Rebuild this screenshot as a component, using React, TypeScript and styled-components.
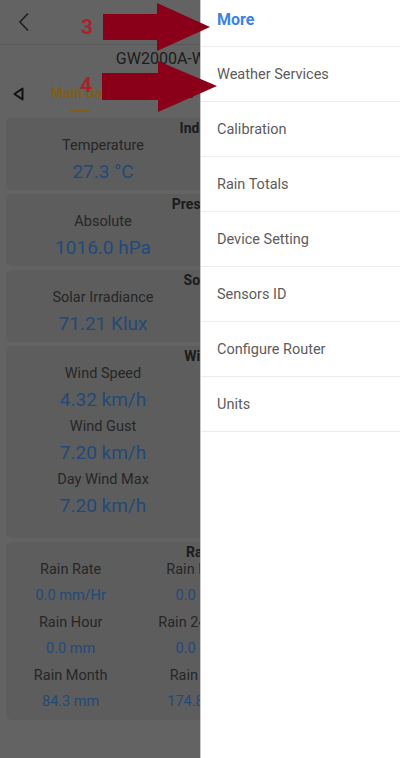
import React from 'react'
import styled, { createGlobalStyle } from 'styled-components'

const GlobalStyle = createGlobalStyle`
  html, body {
    margin: 0;
    padding: 0;
  }
  body {
    font-family: Roboto, "Noto Sans", "Liberation Sans", sans-serif;
  }
`

const Screen = styled.div`
  position: relative;
  display: flex;
  width: 400px;
  height: 758px;
  overflow: hidden;
`

// left half of the app, dimmed by the open drawer
const Backdrop = styled.div`
  flex: none;
  width: 200px;
  height: 100%;
  overflow: hidden;
  background: #636363;
`

const Page = styled.div`
  display: flex;
  flex-direction: column;
  width: 400px;
`

const TopBar = styled.div`
  display: flex;
  align-items: center;
  height: 44px;
  padding-left: 17px;
  border-bottom: 1px solid #5a5a5a;
`

const DeviceName = styled.div`
  height: 28px;
  line-height: 28px;
  text-align: center;
  font-size: 16px;
  color: #1c1c1c;
`

const TabBar = styled.div`
  display: flex;
  align-items: flex-start;
  height: 45px;
  padding: 12px 0 0 13px;
  box-sizing: border-box;
`

const TabIcon = styled.svg`
  margin-top: 2px;
  flex: none;
`

const Tab = styled.div<{ $active?: boolean }>`
  display: flex;
  flex-direction: column;
  align-items: center;
  margin-left: ${p => (p.$active ? '27px' : '41px')};
  font-size: 14px;
  font-weight: 700;
  line-height: 16px;
  color: ${p => (p.$active ? '#7f5f16' : '#2a2a2a')};
`

const Underline = styled.span`
  display: block;
  width: 20px;
  height: 3px;
  margin: 8px 0 0 -5px;
  border-radius: 2px;
  background: #7f5f16;
`

const CardList = styled.div`
  display: flex;
  flex-direction: column;
  gap: 4px;
  padding: 0 6px;
`

const Card = styled.div`
  padding: 2px 0 6px;
  border-radius: 6px;
  background: #5d5d5d;
`

const CardTitle = styled.div`
  line-height: 16px;
  text-align: center;
  font-size: 14px;
  font-weight: 700;
  color: #1b1b1b;
`

const Columns = styled.div<{ $cols: number }>`
  display: grid;
  grid-template-columns: repeat(${p => p.$cols}, 1fr);
`

const Column = styled.div`
  display: flex;
  flex-direction: column;
  align-items: center;
`

const Label = styled.div`
  line-height: 20px;
  font-size: 14.5px;
  color: #262626;
`

const Value = styled.div<{ $small?: boolean }>`
  margin-top: 4px;
  line-height: 24px;
  font-size: ${p => (p.$small ? '14.5px' : '19px')};
  color: #214a79;
  & + ${Label} {
    margin-top: 5px;
  }
`

const Drawer = styled.nav`
  flex: 1;
  display: flex;
  flex-direction: column;
  background: #fff;
  border-left: 1px solid #c9c9c9;
`

const DrawerHead = styled.div`
  height: 47px;
  padding: 9px 0 0 16px;
  box-sizing: border-box;
  line-height: 22px;
  font-size: 16px;
  font-weight: 700;
  color: #3b82e6;
  border-bottom: 1px solid #ececec;
`

const DrawerItem = styled.div`
  display: flex;
  align-items: center;
  height: 54px;
  padding-left: 16px;
  font-size: 14.5px;
  color: #5c5c5c;
  border-bottom: 1px solid #ececec;
`

const Annotations = styled.svg`
  position: absolute;
  left: 0;
  top: 0;
  pointer-events: none;
`

const StepNumber = styled.text`
  font-family: Roboto, "Liberation Sans", sans-serif;
  font-size: 21px;
  font-weight: 700;
  fill: #ad1f2c;
`

type Metric = { label: string; value: string }

const cards: { title: string; cols: Metric[][] }[] = [
  { title: 'Indoor', cols: [[{ label: 'Temperature', value: '27.3 °C' }], [{ label: 'Humidity', value: '58 %' }]] },
  { title: 'Pressure', cols: [[{ label: 'Absolute', value: '1016.0 hPa' }], [{ label: 'Relative', value: '1016.0 hPa' }]] },
  { title: 'Solar', cols: [[{ label: 'Solar Irradiance', value: '71.21 Klux' }], [{ label: 'UVI', value: '0' }]] },
]

const wind: Metric[] = [
  { label: 'Wind Speed', value: '4.32 km/h' },
  { label: 'Wind Gust', value: '7.20 km/h' },
  { label: 'Day Wind Max', value: '7.20 km/h' },
]

const rain: Metric[][] = [
  [
    { label: 'Rain Rate', value: '0.0 mm/Hr' },
    { label: 'Rain Hour', value: '0.0 mm' },
    { label: 'Rain Month', value: '84.3 mm' },
  ],
  [
    { label: 'Rain Event', value: '0.0 mm' },
    { label: 'Rain 24 Hour', value: '0.0 mm' },
    { label: 'Rain Year', value: '174.8 mm' },
  ],
  [
    { label: 'Rain Day', value: '0.0 mm' },
    { label: 'Rain Week', value: '0.0 mm' },
    { label: 'Rain Total', value: '174.8 mm' },
  ],
]

const menu = ['Weather Services', 'Calibration', 'Rain Totals', 'Device Setting', 'Sensors ID', 'Configure Router', 'Units']

const MetricList = ({ items, small }: { items: Metric[]; small?: boolean }) => (
  <Column>
    {items.map(m => (
      <React.Fragment key={m.label}>
        <Label>{m.label}</Label>
        <Value $small={small}>{m.value}</Value>
      </React.Fragment>
    ))}
  </Column>
)

const Compass = () => (
  <Column>
    <Label>Wind Direction</Label>
    <svg width="140" height="140" viewBox="0 0 140 140" style={{ marginTop: 8 }}>
      <circle cx="70" cy="70" r="62" fill="none" stroke="#3a3a3a" strokeWidth="2" />
      <path d="M70 22 L80 70 L70 62 L60 70 Z" fill="#214a79" />
    </svg>
  </Column>
)

export default function App() {
  return (
    <>
      <GlobalStyle />
      <Screen>
        <Backdrop>
          <Page>
            <TopBar>
              <svg width="14" height="20" viewBox="0 0 14 20">
                <polyline points="11,1.5 3,10 11,18.5" fill="none" stroke="#1f1f1f" strokeWidth="1.6" />
              </svg>
            </TopBar>
            <DeviceName>GW2000A-WIFI7E2C V3</DeviceName>
            <TabBar>
              <TabIcon width="11" height="14" viewBox="0 0 11 14">
                <path d="M9.5 1.5 L1.5 7 L9.5 12.5 Z" fill="none" stroke="#111" strokeWidth="2" strokeLinejoin="round" />
              </TabIcon>
              <Tab $active>
                Main Data
                <Underline />
              </Tab>
              <Tab>Graph</Tab>
            </TabBar>
            <CardList>
              {cards.map(c => (
                <Card key={c.title}>
                  <CardTitle>{c.title}</CardTitle>
                  <Columns $cols={c.cols.length}>
                    {c.cols.map((col, i) => (
                      <MetricList key={i} items={col} />
                    ))}
                  </Columns>
                </Card>
              ))}
              <Card>
                <CardTitle>Wind</CardTitle>
                <Columns $cols={2}>
                  <MetricList items={wind} />
                  <Compass />
                </Columns>
              </Card>
              <Card>
                <CardTitle>Rain</CardTitle>
                <Columns $cols={3}>
                  {rain.map((col, i) => (
                    <MetricList key={i} items={col} small />
                  ))}
                </Columns>
              </Card>
            </CardList>
          </Page>
        </Backdrop>
        <Drawer>
          <DrawerHead>More</DrawerHead>
          {menu.map(m => (
            <DrawerItem key={m}>{m}</DrawerItem>
          ))}
        </Drawer>
        <Annotations width="400" height="758" viewBox="0 0 400 758">
          <polygon points="103,14 157,14 157,3 210,27 157,51 157,40 103,40" fill="#8a0019" />
          <polygon points="102,73 158,73 158,61 217,86 158,112 158,100 102,100" fill="#8a0019" />
          <StepNumber x="81" y="34">3</StepNumber>
          <StepNumber x="80" y="92">4</StepNumber>
        </Annotations>
      </Screen>
    </>
  )
}
